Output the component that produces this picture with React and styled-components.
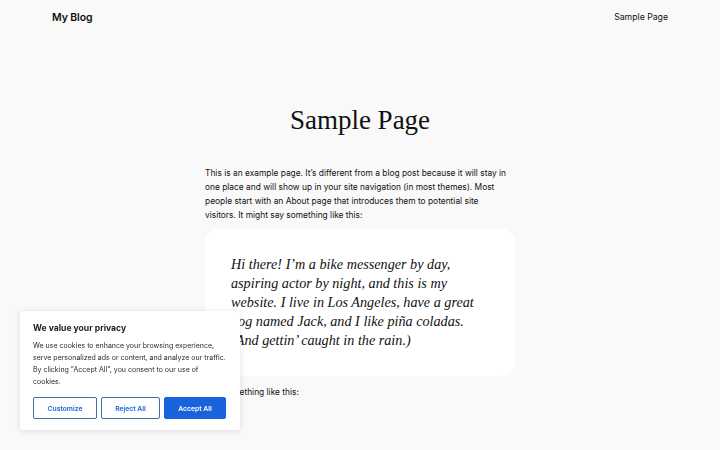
import React from "react";
import styled, { createGlobalStyle } from "styled-components";

const Global = createGlobalStyle`
  html, body { margin: 0; padding: 0; background: #f9f9f9; }
  body { font-family: Inter, "Noto Sans", sans-serif; color: #111; overflow: hidden; }
`;

const Header = styled.header`
  display: flex;
  justify-content: space-between;
  align-items: center;
  height: 34px;
  padding: 0 52px;
`;

const SiteTitle = styled.div`
  font-size: 10.5px;
  font-weight: 600;
  color: #111;
  letter-spacing: -0.1px;
`;

const NavLink = styled.a`
  font-size: 8.7px;
  color: #111;
  text-decoration: none;
`;

const Main = styled.main`
  width: 310px;
  margin: 0 auto;
  padding-top: 66px;
`;

const Title = styled.h1`
  margin: 0 0 26px;
  text-align: center;
  font-family: "Liberation Serif", serif;
  font-weight: 400;
  font-size: 27px;
  line-height: 40px;
  color: #111;
`;

const Para = styled.p`
  margin: 0;
  font-size: 8.4px;
  line-height: 14px;
  color: #111;
  white-space: nowrap;
`;

const Quote = styled.blockquote`
  margin: 7px 0 0;
  background: #fff;
  border-radius: 13px;
  padding: 26px 26px 26px;
  font-family: "Liberation Serif", serif;
  font-style: italic;
  font-size: 14.2px;
  line-height: 19px;
  color: #111;
`;

const After = styled(Para)`
  margin-top: 9px;
`;

const Banner = styled.div`
  position: fixed;
  left: 20px;
  bottom: 20px;
  width: 220px;
  box-sizing: border-box;
  background: #fff;
  padding: 11px 13px 11px;
  box-shadow: 0 1px 6px rgba(0, 0, 0, 0.12);
  border-radius: 2px;
`;

const BannerTitle = styled.div`
  font-size: 8.6px;
  font-weight: 700;
  color: #212121;
  margin: 1px 0 7px;
`;

const BannerText = styled.p`
  margin: 0 0 9px;
  font-size: 7px;
  line-height: 12px;
  color: #2a2a2a;
  white-space: nowrap;
`;

const Buttons = styled.div`
  display: grid;
  grid-template-columns: 64px 59px 62px;
  gap: 4px;
`;

const Btn = styled.button`
  height: 22px;
  box-sizing: border-box;
  font-family: Inter, sans-serif;
  font-size: 6.8px;
  font-weight: 600;
  border-radius: 2px;
  border: 1.5px solid ${(p) => (p.$primary ? "#1863dc" : "#3f6fa8")};
  background: ${(p) => (p.$primary ? "#1863dc" : "#fff")};
  color: ${(p) => (p.$primary ? "#fff" : "#1863dc")};
  padding: 0;
`;

export default function App() {
  return (
    <>
      <Global />
      <Header>
        <SiteTitle>My Blog</SiteTitle>
        <NavLink href="#">Sample Page</NavLink>
      </Header>
      <Main>
        <Title>Sample Page</Title>
        <Para>
          This is an example page. It’s different from a blog post because it will stay in<br />
          one place and will show up in your site navigation (in most themes). Most<br />
          people start with an About page that introduces them to potential site<br />
          visitors. It might say something like this:
        </Para>
        <Quote>
          Hi there! I’m a bike messenger by day,<br />
          aspiring actor by night, and this is my<br />
          website. I live in Los Angeles, have a great<br />
          dog named Jack, and I like piña coladas.<br />
          (And gettin’ caught in the rain.)
        </Quote>
        <After>…or something like this:</After>
      </Main>
      <Banner>
        <BannerTitle>We value your privacy</BannerTitle>
        <BannerText>
          We use cookies to enhance your browsing experience,<br />
          serve personalized ads or content, and analyze our traffic.<br />
          By clicking "Accept All", you consent to our use of<br />
          cookies.
        </BannerText>
        <Buttons>
          <Btn>Customize</Btn>
          <Btn>Reject All</Btn>
          <Btn $primary>Accept All</Btn>
        </Buttons>
      </Banner>
    </>
  );
}
